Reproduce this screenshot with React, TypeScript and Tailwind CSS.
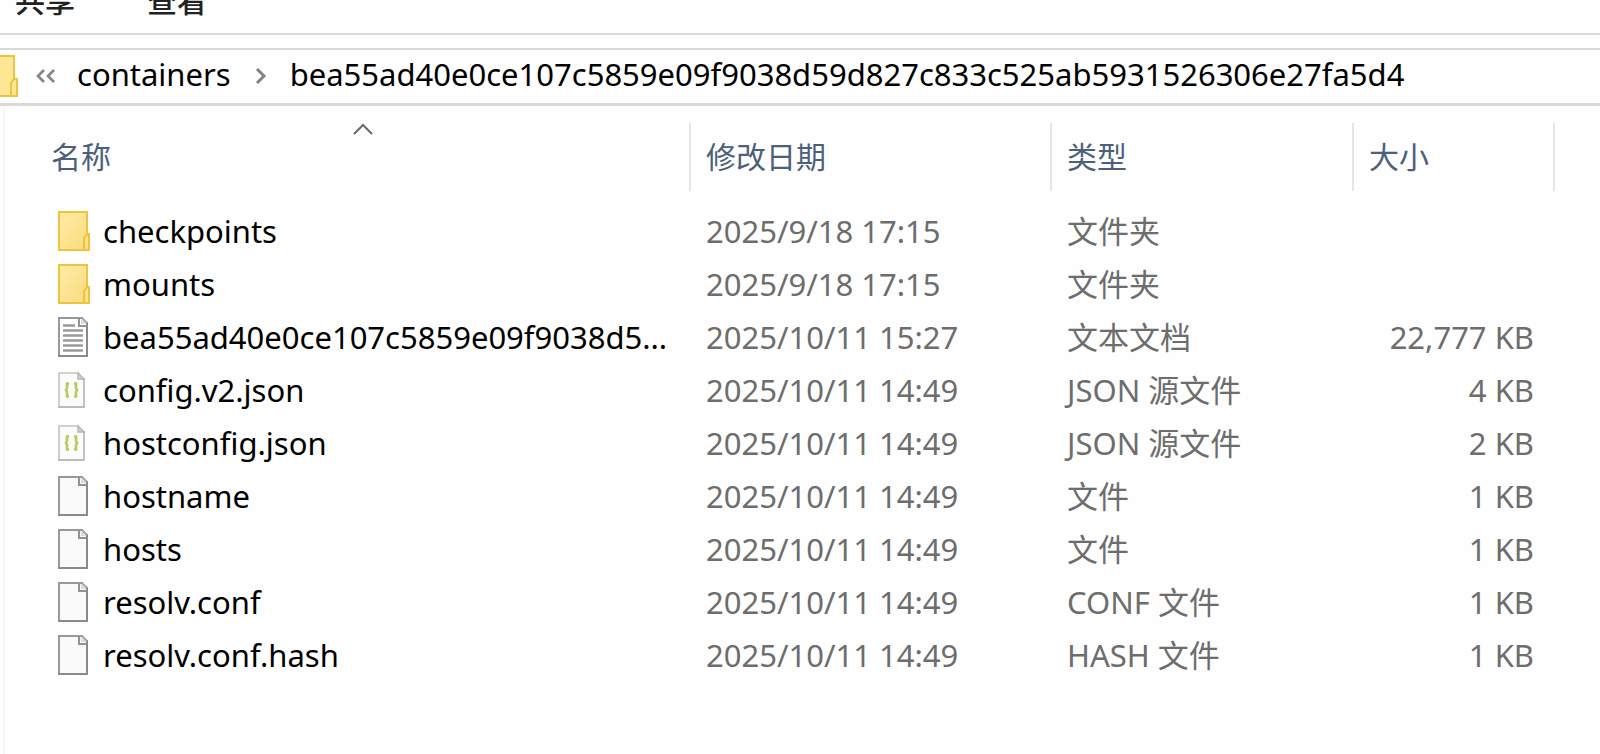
type Kind = "folder" | "text" | "json" | "blank";

interface Entry {
  name: string;
  kind: Kind;
  modified: string;
  type: string;
  size: string;
}

const entries: Entry[] = [
  { name: "checkpoints", kind: "folder", modified: "2025/9/18 17:15", type: "文件夹", size: "" },
  { name: "mounts", kind: "folder", modified: "2025/9/18 17:15", type: "文件夹", size: "" },
  { name: "bea55ad40e0ce107c5859e09f9038d5...", kind: "text", modified: "2025/10/11 15:27", type: "文本文档", size: "22,777 KB" },
  { name: "config.v2.json", kind: "json", modified: "2025/10/11 14:49", type: "JSON 源文件", size: "4 KB" },
  { name: "hostconfig.json", kind: "json", modified: "2025/10/11 14:49", type: "JSON 源文件", size: "2 KB" },
  { name: "hostname", kind: "blank", modified: "2025/10/11 14:49", type: "文件", size: "1 KB" },
  { name: "hosts", kind: "blank", modified: "2025/10/11 14:49", type: "文件", size: "1 KB" },
  { name: "resolv.conf", kind: "blank", modified: "2025/10/11 14:49", type: "CONF 文件", size: "1 KB" },
  { name: "resolv.conf.hash", kind: "blank", modified: "2025/10/11 14:49", type: "HASH 文件", size: "1 KB" },
];

function FolderIcon() {
  return (
    <svg width="32" height="40" viewBox="0 0 32 40" className="shrink-0" aria-hidden="true">
      <defs>
        <linearGradient id="folder" x1="0" y1="0" x2="1" y2="1">
          <stop offset="0" stopColor="#ffeca6" />
          <stop offset="1" stopColor="#fadb7c" />
        </linearGradient>
      </defs>
      <path d="M1 1H29V23H31V39H1Z" fill="url(#folder)" stroke="#ecc440" strokeWidth="2" />
      <path d="M29 23L26 27V38" fill="none" stroke="#ecc440" strokeWidth="2" />
      <path d="M28 28L30 25V38H28Z" fill="#ffe28a" />
    </svg>
  );
}

function PageIcon({ lines }: { lines: boolean }) {
  return (
    <svg width="32" height="40" viewBox="0 0 32 40" className="shrink-0" aria-hidden="true">
      <path d="M1 1H24L29 6V39H1Z" fill={lines ? "#ffffff" : "#fafafa"} />
      <path d="M1 40V1H25" fill="none" stroke="#999999" strokeWidth="2" />
      <path d="M0 39H29V5" fill="none" stroke="#8a8a8a" strokeWidth="2" />
      <path d="M21 1V9H29" fill="none" stroke="#929292" strokeWidth="2" />
      <path d="M23 2L28 7H23Z" fill="#dcdcdc" />
      <path d="M24 1L29 6" stroke="#a6a6a6" strokeWidth="2" />
      {lines && (
        <path d="M5 8.5H17M5 13.5H25M5 18.5H25M5 23.5H25M5 28.5H25M5 33.5H25" stroke="#9a9a9a" strokeWidth="2.4" />
      )}
    </svg>
  );
}

function JsonIcon() {
  return (
    <svg width="32" height="40" viewBox="0 0 32 40" className="shrink-0" aria-hidden="true">
      <path d="M1 3H21L26 8V37H1Z" fill="#fbfbfb" />
      <path d="M1 38V3H21" fill="none" stroke="#c4c4c4" strokeWidth="1.6" />
      <path d="M0 37H26V8" fill="none" stroke="#bcbcbc" strokeWidth="1.8" />
      <path d="M20 3V9H26Z" fill="#d5d5d5" stroke="#b4b4b4" strokeWidth="1.4" />
      <path d="M11 13.500H9V18L8 20L9 22V26.500H11" fill="none" stroke="#b9c95c" strokeWidth="2.6" />
      <path d="M16 13.500H18V18L19 20L18 22V26.500H16" fill="none" stroke="#b9c95c" strokeWidth="2.6" />
    </svg>
  );
}

function EntryIcon({ kind }: { kind: Kind }) {
  if (kind === "folder") return <FolderIcon />;
  if (kind === "json") return <JsonIcon />;
  return <PageIcon lines={kind === "text"} />;
}

const headings = ["名称", "修改日期", "类型", "大小"];

export default function App() {
  return (
    <div className="flex min-h-screen flex-col overflow-hidden bg-[#fefefe] font-['Noto_Sans','Noto_Sans_CJK_SC',sans-serif] text-[31px] leading-9 text-black">
      <div className="flex h-[35px] shrink-0 items-end gap-[72px] overflow-hidden border-b-2 border-[#dadada] pb-[17px] pl-[15px] text-[30px] leading-[30px] font-medium text-[#222222]">
        <button type="button">共享</button>
        <button type="button">查看</button>
      </div>

      <nav
        aria-label="地址"
        className="mt-[13px] flex h-[58px] shrink-0 items-center border-t-2 border-b-3 border-[#dadada] pb-[2px] whitespace-nowrap"
      >
        <svg width="18" height="42" viewBox="0 0 18 42" className="shrink-0" aria-hidden="true">
          <path d="M-2 1H14V24H17V41H-2Z" fill="#fde795" stroke="#ecc440" strokeWidth="2" />
          <path d="M14 24L11 28V40" fill="none" stroke="#ecc440" strokeWidth="2" />
        </svg>
        <button type="button" aria-label="上级文件夹" className="ml-[17px]">
          <svg width="21" height="14" viewBox="0 0 21 14" fill="none" stroke="#858585" strokeWidth="2.6">
            <path d="M9 1L3 7L9 13M19 1L13 7L19 13" />
          </svg>
        </button>
        <a href="#containers" className="ml-[21px] pb-1">containers</a>
        <svg width="12" height="16" viewBox="0 0 12 16" className="mr-[23px] ml-6 shrink-0" fill="none" stroke="#858585" strokeWidth="3" aria-hidden="true">
          <path d="M2 1L9 8L2 15" />
        </svg>
        <a href="#current" className="pb-1">bea55ad40e0ce107c5859e09f9038d59d827c833c525ab5931526306e27fa5d4</a>
      </nav>

      <main className="ml-[3px] grow border-l-2 border-[#f7f7f7] pt-[17px]">
        <table className="w-full table-fixed border-collapse text-left text-[#6d6d6d]">
          <colgroup>
            <col className="w-[686px]" />
            <col className="w-[361px]" />
            <col className="w-[302px]" />
            <col className="w-[201px]" />
            <col />
          </colgroup>
          <thead>
            <tr>
              {headings.map((heading, index) => (
                <th key={heading} scope="col" className="p-0 pb-[13px] font-normal">
                  <button
                    type="button"
                    className={`relative flex h-[68px] w-full items-center border-r-2 border-[#e5e5e5] text-[30px] text-[#4c607a] ${index === 0 ? "pl-[46px]" : "pl-[15px]"}`}
                  >
                    {heading}
                    {index === 0 && (
                      <svg width="20" height="12" viewBox="0 0 20 12" className="absolute top-0 left-1/2 ml-1.5" fill="none" stroke="#6a6a6a" strokeWidth="2" aria-hidden="true">
                        <path d="M1 11L10 2L19 11" />
                      </svg>
                    )}
                  </button>
                </th>
              ))}
              <td />
            </tr>
          </thead>
          <tbody>
            {entries.map((entry) => (
              <tr key={entry.name} className="h-[53px] whitespace-nowrap">
                <td className="p-0 pl-[53px]">
                  <div className="flex items-center gap-[13px] text-black">
                    <EntryIcon kind={entry.kind} />
                    <span>{entry.name}</span>
                  </div>
                </td>
                <td className="p-0 pl-[15px]">{entry.modified}</td>
                <td className="p-0 pl-[15px]">{entry.type}</td>
                <td className="p-0 pr-[21px] text-right">{entry.size}</td>
                <td />
              </tr>
            ))}
          </tbody>
        </table>
      </main>
    </div>
  );
}
